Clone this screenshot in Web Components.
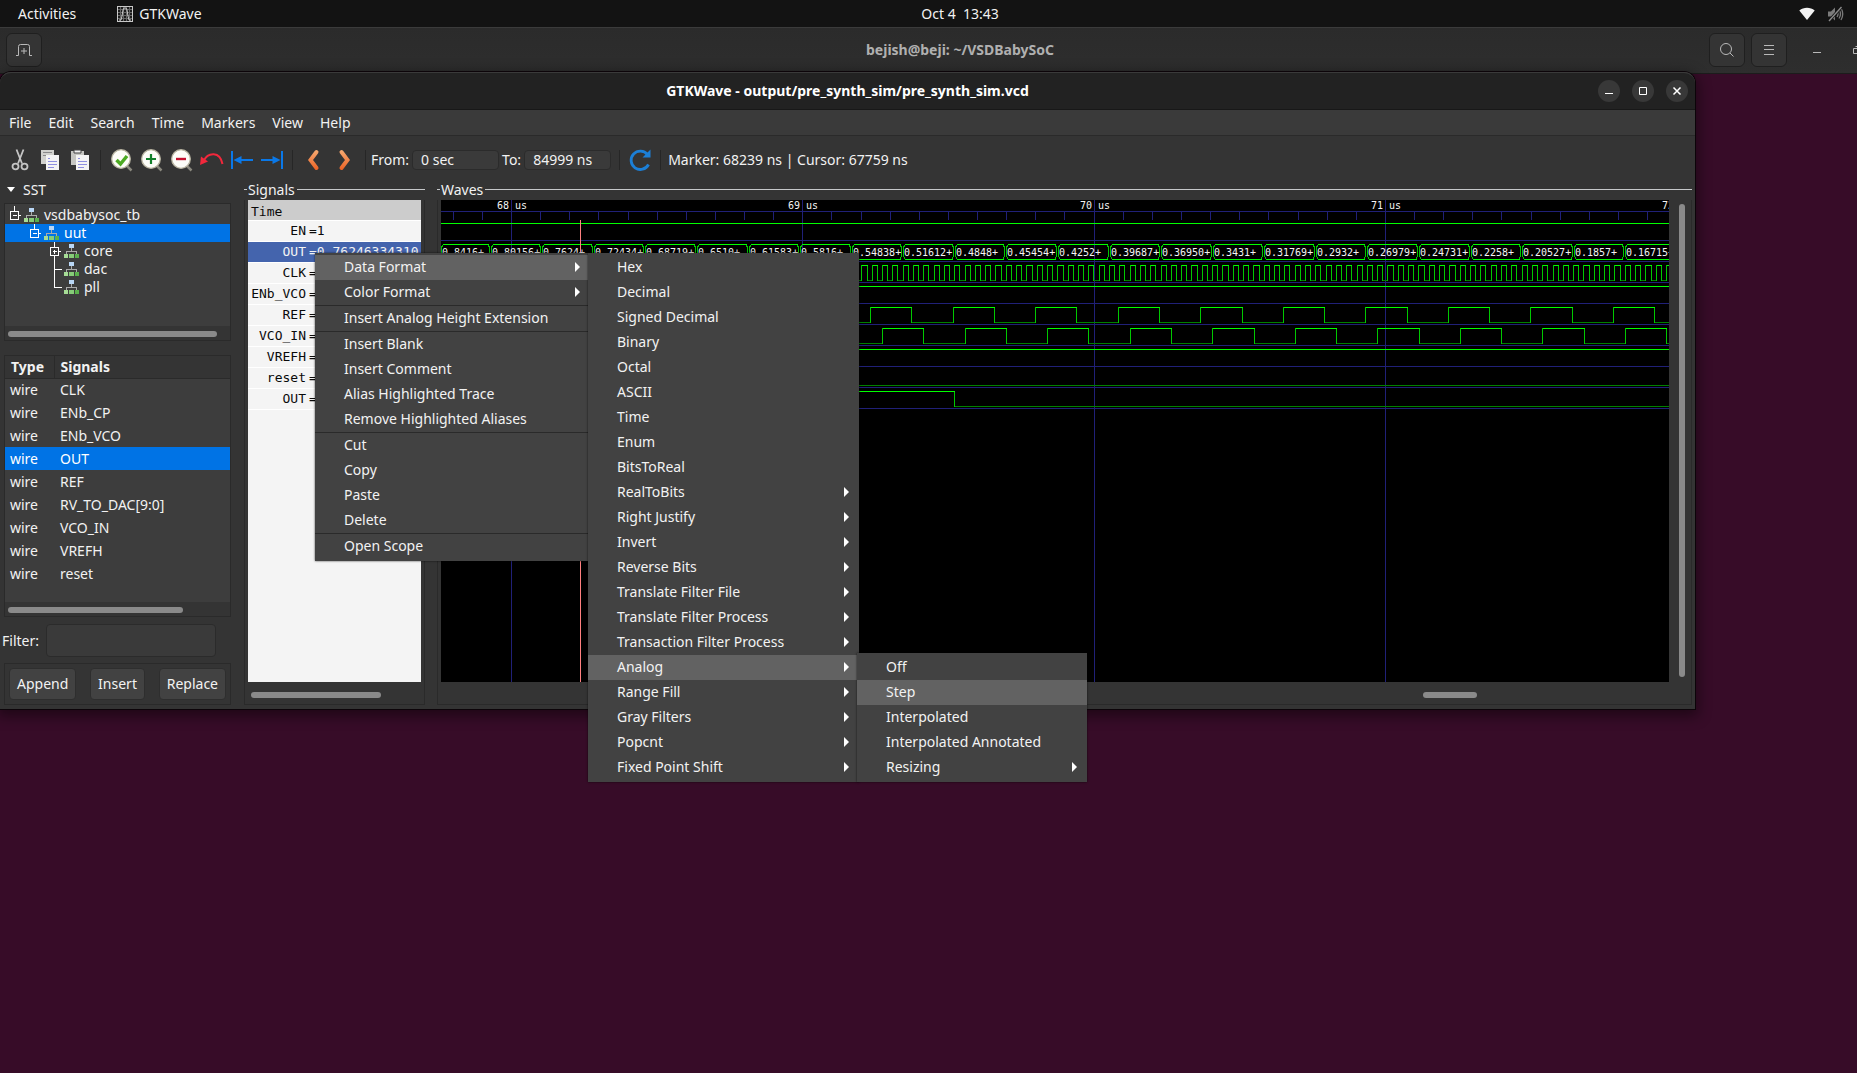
<!DOCTYPE html>
<html lang="en">
<head>
<meta charset="utf-8">
<title>GTKWave - output/pre_synth_sim/pre_synth_sim.vcd</title>
<style>
  html, body { margin: 0; height: 100%; }
  body { overflow: hidden; background: #370c28; }
</style>
</head>
<body>
<desk-top>
  <top-bar></top-bar>
  <terminal-header>bejish@beji: ~/VSDBabySoC</terminal-header>
  <wave-window>
    <title-bar slot="title">GTKWave - output/pre_synth_sim/pre_synth_sim.vcd</title-bar>
    <menu-bar slot="menu"></menu-bar>
    <tool-bar slot="tools"></tool-bar>
    <sst-panel slot="sst"></sst-panel>
    <signal-list slot="signals"></signal-list>
    <wave-view slot="waves"></wave-view>
  </wave-window>
  <popup-menu style="left:315px;top:253px;width:275px">
    <menu-item arrow active>Data Format</menu-item>
    <menu-item arrow>Color Format</menu-item>
    <hr>
    <menu-item>Insert Analog Height Extension</menu-item>
    <hr>
    <menu-item>Insert Blank</menu-item>
    <menu-item>Insert Comment</menu-item>
    <menu-item>Alias Highlighted Trace</menu-item>
    <menu-item>Remove Highlighted Aliases</menu-item>
    <hr>
    <menu-item>Cut</menu-item>
    <menu-item>Copy</menu-item>
    <menu-item>Paste</menu-item>
    <menu-item>Delete</menu-item>
    <hr>
    <menu-item>Open Scope</menu-item>
  </popup-menu>
  <popup-menu style="left:588px;top:253px;width:271px">
    <menu-item>Hex</menu-item>
    <menu-item>Decimal</menu-item>
    <menu-item>Signed Decimal</menu-item>
    <menu-item>Binary</menu-item>
    <menu-item>Octal</menu-item>
    <menu-item>ASCII</menu-item>
    <menu-item>Time</menu-item>
    <menu-item>Enum</menu-item>
    <menu-item>BitsToReal</menu-item>
    <menu-item arrow>RealToBits</menu-item>
    <menu-item arrow>Right Justify</menu-item>
    <menu-item arrow>Invert</menu-item>
    <menu-item arrow>Reverse Bits</menu-item>
    <menu-item arrow>Translate Filter File</menu-item>
    <menu-item arrow>Translate Filter Process</menu-item>
    <menu-item arrow>Transaction Filter Process</menu-item>
    <menu-item arrow active>Analog</menu-item>
    <menu-item arrow>Range Fill</menu-item>
    <menu-item arrow>Gray Filters</menu-item>
    <menu-item arrow>Popcnt</menu-item>
    <menu-item arrow>Fixed Point Shift</menu-item>
  </popup-menu>
  <popup-menu style="left:857px;top:653px;width:230px">
    <menu-item>Off</menu-item>
    <menu-item active>Step</menu-item>
    <menu-item>Interpolated</menu-item>
    <menu-item>Interpolated Annotated</menu-item>
    <menu-item arrow>Resizing</menu-item>
  </popup-menu>
</desk-top>

<script>
const BASE = `:host,*{box-sizing:border-box}
button{font:inherit;color:inherit;background:none;border:0;padding:0;margin:0;white-space:nowrap}
svg{display:block;flex:none}`;

function define(name, css, html) {
  const tpl = document.createElement('template');
  tpl.innerHTML = `<style>${BASE}${css}</style>${html}`;
  customElements.define(name, class extends HTMLElement {
    constructor() {
      super();
      this.attachShadow({ mode: 'open' }).append(tpl.content.cloneNode(true));
    }
  });
}

/* ---------- desktop ---------- */
define('desk-top', `
:host{display:block;position:relative;width:calc(100% + 63px);min-height:100%;
  font:14px/18px "Noto Sans","Open Sans",sans-serif;color:#f2f2f2;background:#370c28}`,
`<slot></slot>`);

define('top-bar', `
:host{display:grid;grid-template-columns:1fr auto 1fr;align-items:center;height:27px;background:#131313}
.l{display:flex;align-items:center;padding-left:18px}
.app{display:flex;align-items:center;gap:6px;margin-left:41px}
.r{display:flex;justify-content:flex-end;align-items:center;gap:12px;padding-right:76px}
.clock{white-space:pre}`,
`<div class="l"><button>Activities</button>
  <button class="app"><svg width="16" height="16" viewBox="0 0 16 16"><rect x=".5" y=".5" width="15" height="15" fill="#1c1c1c" stroke="#c9c9c9"/><path d="M3.5 1v14M6.5 1v14M9.5 1v14M12.5 1v14M1 3.5h14M1 6.5h14M1 9.5h14M1 12.5h14" stroke="#666"/><path d="M2 14h2l1-4 1-6 1-2h2l1 2 1 6 1 4h2" fill="none" stroke="#ccc"/></svg>GTKWave</button></div>
<button class="clock">Oct 4  13:43</button>
<div class="r">
  <svg width="16" height="14" viewBox="0 0 16 14"><path d="M.3 3.5C4.500-.2 11.500-.2 15.700 3.500L8 13z" fill="#f2f2f2"/></svg>
  <svg width="17" height="16" viewBox="0 0 17 16"><path d="M1 5.500h3l4-4v13l-4-4H1z" fill="#7a7a7a"/><path d="M10 5q2 3 0 6M12 3.500q3 4.500 0 9M14 2q3.500 6 0 12" fill="none" stroke="#7a7a7a" stroke-width="1.300"/><path d="M2 15L14.500 1" stroke="#131313" stroke-width="3"/><path d="M2 15L14.500 1" stroke="#8a8a8a" stroke-width="1.400"/></svg>
</div>`);

define('terminal-header', `
:host{display:grid;grid-template-columns:1fr auto 1fr;align-items:center;height:47px;padding-bottom:1px;
  background:linear-gradient(#2b2b2b,#2e2e2e);border-top:1px solid #3b3b3b;border-bottom:1px solid #1c1c1c;color:#b0b0b0;font-weight:700}
.l{padding-left:6px}
.r{display:flex;justify-content:flex-end;align-items:center;gap:6px;padding-right:53px}
button{display:grid;place-items:center;width:36px;height:34px}
.box{background:#343434;border:1px solid #1f1f1f;border-radius:6px}
.flat{width:20px}.min{margin:0 14px}
svg{fill:none;stroke:#b9b9b9}`,
`<div class="l"><button class="box" aria-label="New tab"><svg width="16" height="14" viewBox="0 0 16 14"><path d="M0 12.500h2.500V3.500q0-2 2-2h7q2 0 2 2v9H16M8 5v6M5 8h6"/></svg></button></div>
<slot></slot>
<div class="r">
 <button class="box" aria-label="Search"><svg width="16" height="16" viewBox="0 0 16 16"><circle cx="7" cy="7" r="5.500"/><path d="M11 11l3.500 3.500"/></svg></button>
 <button class="box" aria-label="Menu"><svg width="12" height="12" viewBox="0 0 12 12"><path d="M1 1.500h10M1 5.500h10M1 10.500h10"/></svg></button>
 <button class="flat min" aria-label="Minimize"><svg width="10" height="10" viewBox="0 0 10 10"><path d="M1 7.500h8"/></svg></button>
 <button class="flat" aria-label="Restore"><svg width="10" height="10" viewBox="0 0 10 10"><path d="M1.500 3.500h6v5h-6zM3.500 1.500h6v5"/></svg></button>
</div>`);

/* ---------- window ---------- */
define('wave-window', `
:host{position:absolute;left:0;top:72px;width:calc(100% - 225px);display:flex;flex-direction:column;
  background:#343434;border-radius:11px 11px 0 0;box-shadow:0 0 0 1px #0c0409,0 4px 14px 3px rgba(0,0,0,.45)}
.main{display:flex;gap:12px;padding:0 3px 4px 0}
slot[name=waves]::slotted(*){flex:1;min-width:0}`,
`<slot name="title"></slot><slot name="menu"></slot><slot name="tools"></slot>
<div class="main"><slot name="sst"></slot><slot name="signals"></slot><slot name="waves"></slot></div>`);

define('title-bar', `
:host{display:grid;grid-template-columns:1fr auto 1fr;align-items:center;height:38px;background:#222;color:#fff;
  font-weight:700;border-radius:11px 11px 0 0;border-top:1px solid #3a3a3a;border-bottom:1px solid #181818}
.r{display:flex;justify-content:flex-end;gap:12px;padding-right:7px}
button{width:22px;height:22px;border-radius:11px;background:#383838;display:grid;place-items:center}
svg{fill:none;stroke:#fff}`,
`<span></span><slot></slot><div class="r">
<button aria-label="Minimize"><svg width="10" height="10" viewBox="0 0 10 10"><path d="M1 7.500h8"/></svg></button>
<button aria-label="Maximize"><svg width="10" height="10" viewBox="0 0 10 10"><path d="M1.500 1.500h7v7h-7z"/></svg></button>
<button aria-label="Close"><svg width="10" height="10" viewBox="0 0 10 10"><path d="M1.500 1.500l7 7M8.500 1.500l-7 7" stroke-width="1.500"/></svg></button></div>`);

define('menu-bar', `
:host{display:flex;gap:17px;align-items:center;height:26px;padding:1px 0 0 9px;background:#3a3a3a;border-bottom:1px solid #2a2a2a}`,
['File','Edit','Search','Time','Markers','View','Help'].map(t => `<button>${t}</button>`).join(''));

const page = (x, y) => `<path d="M${x} ${y}h13v15H${x}z" fill="#f4f4f4"/>`;
const lens = inner => `<path d="M16 17l5.500 5.500" stroke="#8b897f" stroke-width="2.500"/><circle cx="11" cy="11" r="9.300" fill="#fdfdf8" stroke="#b9b5a2" stroke-width="1.300"/>${inner}`;
const ICONS = {
  Cut: `<g fill="none" stroke="#c4c4c4" stroke-width="1.800"><path d="M8.500 1.500l5.500 14M15.500 1.500L10 15.500"/><ellipse cx="7.500" cy="18.500" rx="3" ry="2.800"/><ellipse cx="16.500" cy="18.500" rx="3" ry="2.800"/></g>`,
  Copy: `<path d="M3 2h13v14H3z" fill="#d2d2ce"/><path d="M5 4.500h9M5 7.500h3" stroke="#8a8a8a"/>${page(8,7)}<path d="M10 10.500h2M10 13.500h9M10 16.500h9M10 19.500h6" stroke="#8f8fe0"/>`,
  Paste: `<path d="M3 3h13v14H3z" fill="#c6c6c2"/><path d="M6 2h7v3H6z" fill="#f2f2f2" stroke="#444"/>${page(8,7)}<path d="M10 10.500h2M10 13.500h9M10 16.500h9M10 19.500h6" stroke="#8f8fe0"/>`,
  'Zoom fit': lens('<path d="M6.500 12l4 4 6.500-8" fill="none" stroke="#4caa22" stroke-width="3.500"/>'),
  'Zoom in': lens('<path d="M11 6v10M6 11h10" stroke="#12802a" stroke-width="2.200"/>'),
  'Zoom out': lens('<path d="M6 11h10" stroke="#c4102e" stroke-width="2.400"/>'),
  Undo: `<path d="M3.500 13C8 4 20 3 22.500 16" fill="none" stroke="#f2283c" stroke-width="2"/><path d="M0 17l1-8.500 7 5z" fill="#f2283c"/>`,
  'To start': `<path d="M2 3v18" stroke="#0a78e8" stroke-width="2"/><path d="M8 12h15" stroke="#0a78e8" stroke-width="2"/><path d="M3.500 12l8-4v8z" fill="#0a78e8"/>`,
  'To end': `<path d="M22 3v18" stroke="#0a78e8" stroke-width="2"/><path d="M1 12h15" stroke="#0a78e8" stroke-width="2"/><path d="M20.500 12l-8-4v8z" fill="#0a78e8"/>`,
  Previous: `<path d="M15.500 4l-6 8 6 8" fill="none" stroke="url(#o)" stroke-width="4" stroke-linecap="round"/>`,
  Next: `<path d="M8.500 4l6 8-6 8" fill="none" stroke="url(#o)" stroke-width="4" stroke-linecap="round"/>`,
  Reload: `<path d="M19.500 6.500A9.200 9.200 0 1 0 20.500 16.500" fill="none" stroke="#1c7fd6" stroke-width="2.800"/><path d="M22.500 1.500v8h-8z" fill="#1c7fd6"/>`
};
const tool = n => `<button class="t" aria-label="${n}"><svg width="24" height="24" viewBox="0 0 24 24"><defs><linearGradient id="o" x1="0" y1="0" x2="0" y2="24" gradientUnits="userSpaceOnUse"><stop offset="0" stop-color="#f7b27a"/><stop offset="1" stop-color="#ea5a1c"/></linearGradient></defs>${ICONS[n]}</svg></button>`;
define('tool-bar', `
:host{display:flex;align-items:center;height:45px;padding:2px 0 0 5px}
.t{width:30px;height:30px;display:grid;place-items:center}
i{width:1px;height:20px;background:#262626;margin:0 5px}
i:first-of-type{margin:0 6px 0 5px}
.nav{display:flex;gap:2px}
input{width:87px;height:20px;margin:0 3px;padding:0 8px;font:inherit;color:inherit;background:#3a3a3a;border:1px solid #2b2b2b;border-radius:4px}
output{white-space:nowrap;margin-left:2px}`,
tool('Cut')+tool('Copy')+tool('Paste')+'<i></i>'+['Zoom fit','Zoom in','Zoom out','Undo','To start','To end'].map(tool).join('')
+'<i></i><div class="nav">'+tool('Previous')+tool('Next')+'</div><i></i>'
+'<label for="from">From:</label><input id="from" value="0 sec"><label for="to">To:</label><input id="to" value="84999 ns"><i></i>'
+tool('Reload')+'<i></i><output>Marker: 68239 ns | Cursor: 67759 ns</output>');

/* ---------- SST panel ---------- */
const joint = {
  minus: 'M9.500 0v5M5.500 5.500h8v8h-8zM7.500 9.500h4M14 9.500h2',
  plus:  'M9.500 0v5M5.500 5.500h8v8h-8zM7.500 9.500h4M9.500 7.500v4M14 9.500h2M9.500 14v4',
  tee:   'M9.500 0v18M9.500 9.500h7',
  end:   'M9.500 0v9.500h7'
};
const node = (depth, kind, name, cls='') => `<li class="${cls}" style="padding-left:${depth*20}px">
<svg width="18" height="18" viewBox="0 0 18 18" fill="none" stroke="#fff" shape-rendering="crispEdges"><path d="${joint[kind]}"/></svg>
<svg width="18" height="18" viewBox="0 0 18 18" shape-rendering="crispEdges"><path d="M8.500 6v3M3.500 12V9.500h10V12" fill="none" stroke="#aaa"/><path d="M6 2h5v4H6z" fill="#b9d6f5"/><path d="M1 12h4v4H1z" fill="#a6dc96"/><path d="M6 12h5v4H6z" fill="#86cc78"/><path d="M12 12h4v4h-4z" fill="#5ab04c"/></svg><span>${name}</span></li>`;
const wires = ['CLK','ENb_CP','ENb_VCO','OUT','REF','RV_TO_DAC[9:0]','VCO_IN','VREFH','reset'];
define('sst-panel', `
:host{display:flex;flex-direction:column;width:232px;flex:none}
h2{display:flex;align-items:center;gap:8px;margin:0 0 5px 7px;height:17px;line-height:17px;font-size:inherit;font-weight:400}
.frame{margin:0 1px 0 4px;border:1px solid #2a2a2a}
ul{list-style:none;margin:0;padding:2px 0 0 0;height:122px;background:#3d3d3d}
li{display:flex;height:18px;line-height:18px}
li span{padding-left:3px}
.on{background:#0073e5;color:#fff}
.bar{height:14px;padding:5px 0 0 3px}
.thumb{height:6px;border-radius:3px;background:#8a8a8a}
.frame.sig{margin-top:14px}
.tbl{height:246px;background:#3d3d3d}
table{border-collapse:collapse;width:100%;text-align:left}
th{height:22px;padding:0 6px;background:#343434;border-bottom:1px solid #2a2a2a;line-height:18px}
th+th{border-left:1px solid #2a2a2a}
td{height:23px;padding:0 5px;line-height:18px}
td+td{padding-left:6px}
th:first-child{width:49px}
.f{display:flex;align-items:center;gap:7px;margin:7px 16px 6px 2px}
.f input{flex:1;min-width:0;height:33px;background:#3a3a3a;border:1px solid #2b2b2b;border-radius:4px;color:inherit;font:inherit}
.btns{display:flex;justify-content:space-between;padding:4px;height:42px}
.btns button{height:32px;padding:0 7px;background:#424242;border:1px solid #2e2e2e;border-radius:4px}`,
`<h2><svg width="8" height="5" viewBox="0 0 8 5"><path d="M0 0h8L4 5z" fill="#fff"/></svg>SST</h2>
<div class="frame"><ul>${node(0,'minus','vsdbabysoc_tb')}${node(1,'minus','uut','on')}${node(2,'plus','core')}${node(2,'tee','dac')}${node(2,'end','pll')}</ul>
<div class="bar"><div class="thumb" style="width:94%"></div></div></div>
<div class="frame sig"><div class="tbl"><table><thead><tr><th>Type</th><th>Signals</th></tr></thead><tbody>
${wires.map(w => `<tr class="${w==='OUT'?'on':''}"><td>wire</td><td>${w}</td></tr>`).join('')}</tbody></table></div>
<div class="bar"><div class="thumb" style="width:79%"></div></div></div>
<div class="f"><label for="flt">Filter:</label><input id="flt"></div>
<div class="frame btns"><button>Append</button><button>Insert</button><button>Replace</button></div>`);

/* ---------- framed panels ---------- */
const PANEL = `
:host{display:flex;flex-direction:column}
.lg{display:flex;align-items:center;height:19px;line-height:17px;padding-bottom:2px;gap:1px}
.lg::before{content:"";width:3px;height:1px;background:#c6c8ca}
.lg::after{content:"";flex:1;height:1px;background:#c6c8ca;margin-left:1px}
.body{flex:1;border:1px solid #2a2a2a;border-top:0;padding:0 3px;display:flex;flex-direction:column}
.hbar{height:22px;padding-top:10px}
.thumb{height:6px;border-radius:3px;background:#8a8a8a}`;
const rows = [['EN','1'],['OUT','0.76246334310'],['CLK',''],['ENb_VCO',''],['REF',''],['VCO_IN',''],['VREFH',''],['reset',''],['OUT','']];
define('signal-list', PANEL + `
:host{width:181px;flex:none}
.list{flex:1;background:#f4f4f4;color:#0a0a0a;font:13px/20px "DejaVu Sans Mono","Liberation Mono",monospace;overflow:hidden}
.list div{height:21px;display:flex;border-bottom:1px solid #fff;white-space:nowrap}
.list b{font-weight:400;width:58px;text-align:right;flex:none;margin-right:3px}
.list .h{background:#ccc;padding:2px 0 0 3px}
.list .s{background:#4464ad;color:#f4f4f4}`,
`<div class="lg">Signals</div><div class="body"><div class="list"><div class="h">Time</div>
${rows.map(([n,v],i)=>`<div class="${i===1?'s':''}"><b>${n}</b>=${v}</div>`).join('')}</div>
<div class="hbar"><div class="thumb" style="width:130px;margin-left:3px"></div></div></div>`);

/* ---------- waveform drawing ---------- */
function drawWaves() {
  const W = 1236, US = 291.3, X68 = 70, STEP = 51.58;
  const p = (cls, d) => `<path class="${cls}" d="${d}"/>`;
  const r = v => Math.round(v) + .5;
  let grid = 'M0 11.500H' + W, out = '', text = '';
  for (let y = 40.5; y < 220; y += 21) grid += `M0 ${y}H${W}`;
  for (let i = -2; i < 42; i++) {
    const x = r(X68 + i * US / 10);
    grid += i % 10 ? `M${x} 11V20` : `M${x} 0V600`;
  }
  for (let i = 0; i <= 4; i++) text += `<text x="${Math.round(X68 + i * US) - 14}" y="9">${68 + i} us</text>`;
  out += p('n', grid);
  const line = (y, cls) => p(cls, `M0 ${y}.5H${W}`);
  out += line(23, 'hi') + line(86, 'hi') + line(149, 'hi') + line(185, 'lo');
  const clock = (rise, period, top) => {
    let hi = '', lo = '', ed = '';
    for (let x = rise; x < W; x += period) {
      const a = r(x), b = r(x + period / 2), c = r(x + period);
      hi += `M${a} ${top}.5H${b + .5}`; lo += `M${b} ${top + 15}.5H${c}`; ed += `M${a} ${top}V${top + 16}M${b} ${top}V${top + 16}`;
    }
    return p('lo', lo) + p('ed', ed) + p('hi', hi);
  };
  out += clock(49 - STEP, STEP / 5, 65);
  out += clock(429 - 82.56 * 6, 82.56, 107) + clock(441 - 82.56 * 6, 82.56, 128);
  out += p('lo', `M514 206.500H${W}`) + p('ed', 'M513.500 191V207') + p('hi', 'M0 191.500H514');
  const vals = ['0.8416+','0.80156+','0.7624+','0.72434+','0.68719+','0.6510+','0.61583+','0.5816+','0.54838+','0.51612+','0.4848+','0.45454+','0.4252+','0.39687+','0.36950+','0.3431+','0.31769+','0.2932+','0.26979+','0.24731+','0.2258+','0.20527+','0.1857+','0.16715+'];
  vals.forEach((v, i) => {
    const a = i ? r(48.6 + (i - 1) * STEP) : -.5, b = r(48.6 + i * STEP);
    out += p('ed', `M${a + 2} 45L${a + 1} 48V55L${a + 2} 59M${b - 2} 45L${b - 1} 48V55L${b - 2} 59`);
    out += p('hi', `M${a + 2} 44.500H${b - 2}M${a + 2} 59.500H${b - 2}`);
    text += `<text x="${a + 1.5}" y="56">${v}</text>`;
  });
  out += p('mk', 'M139.500 20V600');
  return `<svg width="100%" height="100%">${out}${text}</svg>`;
}
define('wave-view', PANEL + `
.row{flex:1;display:flex}
.cv{flex:1;min-width:0;background:#000;position:relative;overflow:hidden}
.cv svg{position:absolute;inset:0}
path{fill:none;shape-rendering:crispEdges}
.n{stroke:#202078}.hi{stroke:#00ff00}.lo{stroke:#008000}.ed{stroke:#00c800}.mk{stroke:#ff8080}
text{font:10px "DejaVu Sans Mono","Liberation Mono",monospace;fill:#f4f4f4}
.vbar{width:19px;padding:4px 3px 5px 10px}
.vbar div{width:6px;height:100%;border-radius:3px;background:#8a8a8a}
.hbar{display:flex;justify-content:flex-end;padding-right:211px}`,
`<div class="lg">Waves</div><div class="body"><div class="row"><div class="cv">${drawWaves()}</div><div class="vbar"><div></div></div></div>
<div class="hbar"><div class="thumb" style="width:54px"></div></div></div>`);

/* ---------- popup menus ---------- */
define('popup-menu', `
:host{position:absolute;display:block;padding:2px 0;background:#424242;box-shadow:0 0 2px rgba(0,0,0,.7)}
::slotted(hr){height:1px;margin:0;border:0;background:#2a2a2a}`, `<slot></slot>`);
define('menu-item', `
:host{display:block}
button{display:flex;justify-content:space-between;align-items:center;width:100%;height:25px;padding:0 10px 1px 29px}
svg{display:none}
:host([arrow]) svg{display:block}
:host([active]) button{background:#626262}`,
`<button><span><slot></slot></span><svg width="5" height="10" viewBox="0 0 5 10"><path d="M0 0l5 5-5 5z" fill="#fff"/></svg></button>`);
</script>
</body>
</html>
